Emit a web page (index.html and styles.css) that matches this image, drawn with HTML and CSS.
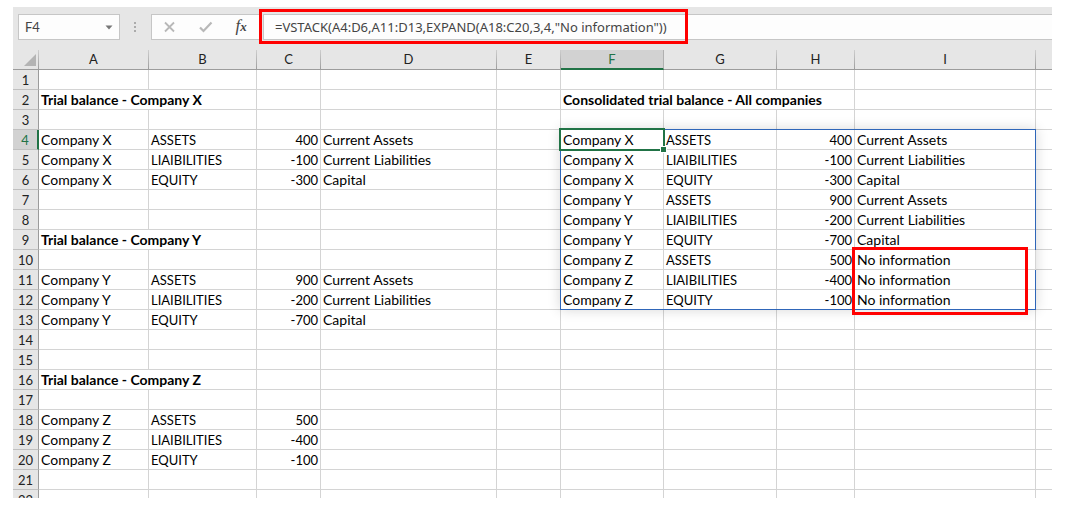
FILE: index.html
```html
<!DOCTYPE html>
<html lang="en">
<head>
<meta charset="utf-8">
<title>Consolidated trial balance</title>
<link rel="stylesheet" href="styles.css">
</head>
<body>
<main class="sheet">
  <div class="formula-bar">
    <div class="name-box">
      <input class="name-input" type="text" value="F4" aria-label="Name box">
      <button class="name-toggle" type="button" aria-label="Show names"><svg width="8" height="5" viewBox="0 0 8 5"><path d="M0.5 0.5h7L4 4.5z" fill="#777"/></svg></button>
    </div>
    <svg class="grip" width="3" height="11" viewBox="0 0 3 11"><path d="M0 0h2v2H0zM0 4h2v2H0zM0 8h2v2H0z" fill="#ababab"/></svg>
    <div class="actions">
      <button type="button" aria-label="Cancel"><svg width="12" height="12" viewBox="0 0 12 12"><path d="M1 1.500l9 9M10 1.500l-9 9" stroke="#b8b8b8" stroke-width="1.8" fill="none"/></svg></button>
      <button type="button" aria-label="Enter"><svg width="14" height="12" viewBox="0 0 14 12"><path d="M1 6.500l3.500 3.500L12.500 1.500" stroke="#b8b8b8" stroke-width="2.200" fill="none"/></svg></button>
      <button class="fx" type="button" aria-label="Insert function">f<span class="fx-sub">x</span></button>
    </div>
    <div class="formula-field">
      <input class="formula-input" type="text" aria-label="Formula" value='=VSTACK(A4:D6,A11:D13,EXPAND(A18:C20,3,4,"No information"))'>
      <span class="mark mark-formula"></span>
    </div>
  </div>
  <table class="grid">
    <colgroup><col class="w-head"><col class="w-a"><col class="w-b"><col class="w-c"><col class="w-d"><col class="w-c"><col class="w-f"><col class="w-g"><col class="w-h"><col class="w-i"><col></colgroup>
    <thead>
      <tr><th class="corner"><svg width="12" height="12" viewBox="0 0 12 12"><path d="M12 0v12H0z" fill="#b4b4b4"/></svg><th>A<th>B<th>C<th>D<th>E<th class="picked">F<th>G<th>H<th>I<th></tr>
    </thead>
    <tbody>
      <tr><th>1<td><td><td><td><td><td><td><td><td><td></tr>
      <tr><th>2<td colspan="2" class="title">Trial balance - Company X<td><td><td><td colspan="3" class="title">Consolidated trial balance - All companies<td><td></tr>
      <tr><th>3<td><td><td><td><td><td><td><td><td><td></tr>
      <tr><th class="picked">4<td>Company X<td class="kind">ASSETS<td class="num">400<td>Current Assets<td><td class="anchor">Company X<span class="spill"></span><span class="active"></span><span class="handle"></span><td class="kind">ASSETS<td class="num">400<td>Current Assets<td></tr>
      <tr><th>5<td>Company X<td class="kind">LIAIBILITIES<td class="num">-100<td>Current Liabilities<td><td>Company X<td class="kind">LIAIBILITIES<td class="num">-100<td>Current Liabilities<td></tr>
      <tr><th>6<td>Company X<td class="kind">EQUITY<td class="num">-300<td>Capital<td><td>Company X<td class="kind">EQUITY<td class="num">-300<td>Capital<td></tr>
      <tr><th>7<td><td><td><td><td><td>Company Y<td class="kind">ASSETS<td class="num">900<td>Current Assets<td></tr>
      <tr><th>8<td><td><td><td><td><td>Company Y<td class="kind">LIAIBILITIES<td class="num">-200<td>Current Liabilities<td></tr>
      <tr><th>9<td colspan="2" class="title">Trial balance - Company Y<td><td><td><td>Company Y<td class="kind">EQUITY<td class="num">-700<td>Capital<td></tr>
      <tr><th>10<td><td><td><td><td><td>Company Z<td class="kind">ASSETS<td class="num">500<td class="anchor">No information<span class="mark mark-result"></span><td></tr>
      <tr><th>11<td>Company Y<td class="kind">ASSETS<td class="num">900<td>Current Assets<td><td>Company Z<td class="kind">LIAIBILITIES<td class="num">-400<td>No information<td></tr>
      <tr><th>12<td>Company Y<td class="kind">LIAIBILITIES<td class="num">-200<td>Current Liabilities<td><td>Company Z<td class="kind">EQUITY<td class="num">-100<td>No information<td></tr>
      <tr><th>13<td>Company Y<td class="kind">EQUITY<td class="num">-700<td>Capital<td><td><td><td><td><td></tr>
      <tr><th>14<td><td><td><td><td><td><td><td><td><td></tr>
      <tr><th>15<td><td><td><td><td><td><td><td><td><td></tr>
      <tr><th>16<td colspan="2" class="title">Trial balance - Company Z<td><td><td><td><td><td><td><td></tr>
      <tr><th>17<td><td><td><td><td><td><td><td><td><td></tr>
      <tr><th>18<td>Company Z<td class="kind">ASSETS<td class="num">500<td><td><td><td><td><td><td></tr>
      <tr><th>19<td>Company Z<td class="kind">LIAIBILITIES<td class="num">-400<td><td><td><td><td><td><td></tr>
      <tr><th>20<td>Company Z<td class="kind">EQUITY<td class="num">-100<td><td><td><td><td><td><td></tr>
      <tr><th>21<td><td><td><td><td><td><td><td><td><td></tr>
      <tr><th>22<td><td><td><td><td><td><td><td><td><td></tr>
    </tbody>
  </table>
</main>
</body>
</html>
```
FILE: styles.css
```css
* { box-sizing: border-box; }

body {
  margin: 0;
  height: 100vh;
  padding: 7px 21px 19px 13px;
  background: #fff;
  color: #000;
  font-family: Lato, "Open Sans", sans-serif;
  font-size: 14px;
}

.sheet {
  height: 100%;
  overflow: hidden;
  background: #fff;
}

input, button {
  margin: 0;
  padding: 0;
  border: 0;
  background: none;
  color: #444;
  font: inherit;
}

.formula-bar {
  display: flex;
  align-items: center;
  height: 43px;
  padding: 7px 0 10px 5px;
  background: #e6e6e6;
}

.name-box {
  display: flex;
  width: 102px;
  height: 26px;
  border: 1px solid #c6c6c6;
  background: #fdfdfd;
}

.name-input {
  flex: 1;
  min-width: 0;
  padding-left: 6px;
  font-size: 13px;
}

.name-toggle {
  display: flex;
  align-items: center;
  justify-content: center;
  width: 20px;
}

.grip { margin: 0 14px; }

.actions {
  display: flex;
  width: 109px;
  height: 26px;
  border: 1px solid #c6c6c6;
  background: #fdfdfd;
}

.actions button {
  display: flex;
  flex: 1;
  align-items: center;
  justify-content: center;
}

.actions .fx {
  align-items: baseline;
  color: #444;
  font: italic 17px/22px "Liberation Serif", serif;
}

.fx-sub {
  font-size: 13px;
  font-weight: bold;
}

.formula-field {
  position: relative;
  display: flex;
  flex: 1;
  height: 26px;
  margin-left: 3px;
  border: 1px solid #c6c6c6;
  border-right: 0;
  background: #fdfdfd;
}

.formula-input {
  flex: 1;
  min-width: 0;
  padding-left: 11px;
  font-family: "Noto Sans", sans-serif;
  font-size: 13px;
}

.mark {
  position: absolute;
  border: 3px solid #f00;
  pointer-events: none;
}

.mark-formula {
  top: -6px;
  left: -5px;
  width: 429px;
  height: 35px;
}

.mark-result {
  top: -3px;
  left: -3px;
  width: 176px;
  height: 68px;
}

.grid {
  width: 100%;
  table-layout: fixed;
  border-collapse: separate;
  border-spacing: 0;
}

.w-head { width: 26px; }
.w-a { width: 110px; }
.w-b { width: 108px; }
.w-c { width: 64px; }
.w-d { width: 176px; }
.w-f { width: 103px; }
.w-g { width: 113px; }
.w-h { width: 78px; }
.w-i { width: 181px; }

.grid th, .grid td {
  height: 20px;
  padding: 1px 2px 0;
  border-right: 1px solid #d4d4d4;
  border-bottom: 1px solid #d4d4d4;
  line-height: 17px;
  text-align: left;
  vertical-align: top;
  white-space: nowrap;
}

.grid th {
  padding: 2px 0 0;
  background: #e6e6e6;
  color: #222;
  font-size: 13px;
  font-weight: normal;
  text-align: center;
}

.grid thead th {
  padding-top: 1px;
  border-right: 1px solid;
  border-image: linear-gradient(#d0d0d0, #9b9b9b) 1;
  border-bottom: 1px solid #9b9b9b;
}

.grid tbody th {
  border-right-color: #9b9b9b;
  border-bottom-color: #c0c0c0;
}

.grid .corner svg {
  display: block;
  margin: 3px 2px 0 auto;
}

.grid thead .picked {
  border-image: none;
  border-right-color: #b0b0b0;
  border-bottom: 2px solid #217346;
  background: #d2d2d2;
  color: #217346;
}

.grid tbody .picked {
  border-right: 2px solid #217346;
  background: #d2d2d2;
  color: #217346;
}

.grid td:last-child, .grid thead th:last-child { border-right: 0; }

.grid .kind, .grid .num {
  padding-top: 2px;
  font-size: 13px;
}

.grid .num { text-align: right; }
.grid .title { font-weight: bold; }
.grid .anchor { position: relative; }

.spill {
  position: absolute;
  top: -1px;
  left: -1px;
  width: 476px;
  height: 181px;
  border: 1px solid #2f66b9;
  box-shadow: 0 0 12px rgba(0, 0, 0, 0.16);
  pointer-events: none;
}

.active {
  position: absolute;
  top: -2px;
  left: -2px;
  width: 106px;
  height: 23px;
  border: 2px solid #217346;
}

.handle {
  position: absolute;
  right: -4px;
  bottom: -4px;
  width: 7px;
  height: 7px;
  border: 1px solid #fff;
  background: #217346;
}
```
